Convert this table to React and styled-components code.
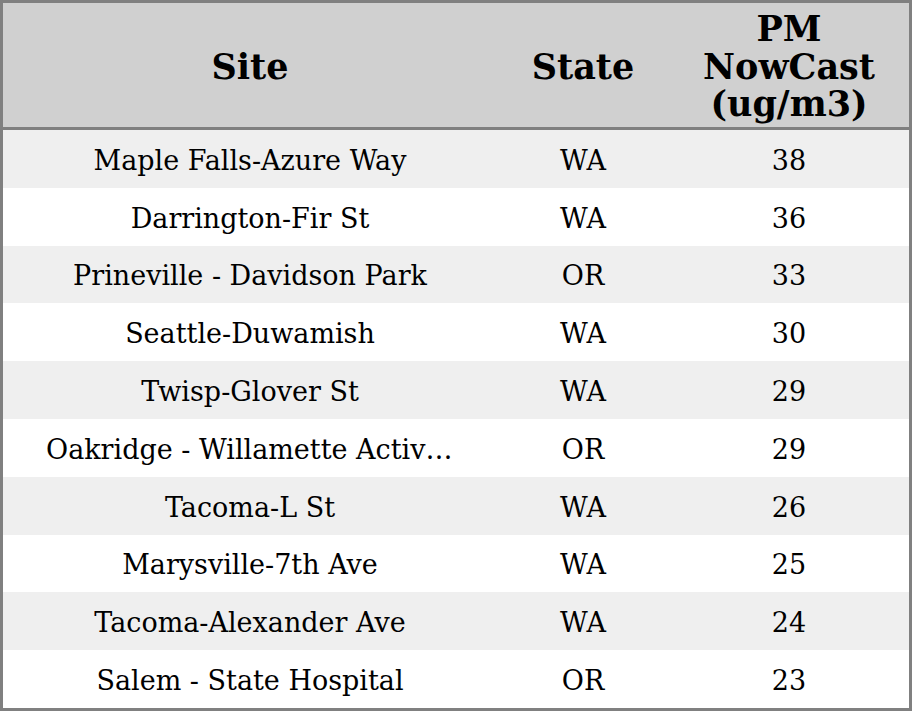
import React from "react";
import styled, { createGlobalStyle } from "styled-components";

const Global = createGlobalStyle`
  html, body { margin: 0; padding: 0; background: #fff; }
  * { box-sizing: border-box; }
`;

const Frame = styled.div`
  width: 912px;
  height: 711px;
  border: 3px solid #808080;
  display: flex;
  flex-direction: column;
  font-family: "DejaVu Serif", serif;
  color: #000;
`;

const cols = "494px 172px 1fr";

const Header = styled.div`
  display: grid;
  grid-template-columns: ${cols};
  height: 127px;
  background: #d0d0d0;
  border-bottom: 3px solid #808080;
  font-weight: bold;
  font-size: 35px;
  line-height: 37.5px;
`;

const HeadCell = styled.div`
  display: flex;
  align-items: center;
  justify-content: center;
  text-align: center;
  padding-top: 3px;
`;

const Body = styled.div`
  flex: 1;
  display: flex;
  flex-direction: column;
`;

const Row = styled.div`
  flex: 1;
  display: grid;
  grid-template-columns: ${cols};
  align-items: center;
  background: ${(p) => (p.$odd ? "#efefef" : "#ffffff")};
  font-size: 27px;
  line-height: 32px;
`;

const Cell = styled.div`
  text-align: center;
  white-space: nowrap;
  overflow: hidden;
  text-overflow: ellipsis;
  padding: 4px ${(p) => (p.$wide ? "43px" : "8px")} 0;
`;

const data = [
  ["Maple Falls-Azure Way", "WA", 38],
  ["Darrington-Fir St", "WA", 36],
  ["Prineville - Davidson Park", "OR", 33],
  ["Seattle-Duwamish", "WA", 30],
  ["Twisp-Glover St", "WA", 29],
  ["Oakridge - Willamette Activity Center", "OR", 29],
  ["Tacoma-L St", "WA", 26],
  ["Marysville-7th Ave", "WA", 25],
  ["Tacoma-Alexander Ave", "WA", 24],
  ["Salem - State Hospital", "OR", 23],
];

export default function App() {
  return (
    <>
      <Global />
      <Frame>
        <Header>
          <HeadCell>Site</HeadCell>
          <HeadCell>State</HeadCell>
          <HeadCell>
            PM
            <br />
            NowCast
            <br />
            (ug/m3)
          </HeadCell>
        </Header>
        <Body>
          {data.map((r, i) => (
            <Row key={i} $odd={i % 2 === 0}>
              <Cell $wide title={r[0]}>{r[0]}</Cell>
              <Cell>{r[1]}</Cell>
              <Cell>{r[2]}</Cell>
            </Row>
          ))}
        </Body>
      </Frame>
    </>
  );
}
